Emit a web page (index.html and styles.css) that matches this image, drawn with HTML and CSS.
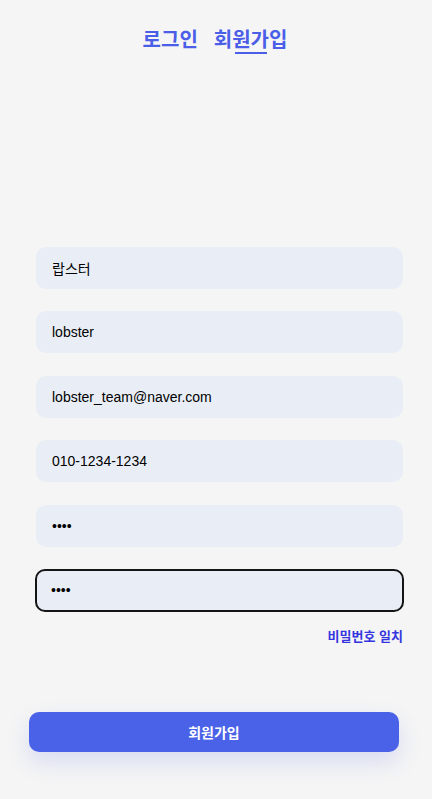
FILE: index.html
```html
<!DOCTYPE html>
<html lang="ko">
<head>
<meta charset="utf-8">
<link rel="stylesheet" href="styles.css">
</head>
<body>
<div class="page">
  <nav class="tabs">
    <span class="tab">로그인</span>
    <span class="tab active">회원가입</span>
  </nav>
  <form class="form">
    <input class="field" type="text" value="랍스터">
    <input class="field" type="text" value="lobster">
    <input class="field" type="text" value="lobster_team@naver.com">
    <input class="field" type="text" value="010-1234-1234">
    <input class="field" type="password" value="1234">
    <input class="field focused" type="password" value="1234" autofocus>
    <p class="match">비밀번호 일치</p>
  </form>
  <button class="submit" type="button">회원가입</button>
</div>
</body>
</html>
```
FILE: styles.css
```css
html, body {
  margin: 0;
  padding: 0;
  background: #f5f5f5;
}
.page {
  height: 799px;
  font-family: "Liberation Sans", "Noto Sans CJK KR", sans-serif;
  display: flex;
  flex-direction: column;
}
.tabs {
  display: flex;
  justify-content: center;
  gap: 16px;
  padding-top: 26px;
  padding-right: 2px;
}
.tab {
  font-family: "Noto Sans CJK KR", sans-serif;
  font-weight: 700;
  font-size: 20px;
  line-height: 26px;
  color: #4a5ee8;
  position: relative;
  padding-bottom: 4px;
}
.tab.active::after {
  content: "";
  position: absolute;
  left: 50%;
  bottom: 2px;
  width: 32px;
  height: 2px;
  margin-left: -16px;
  background: #4a5ee8;
}
.form {
  margin: 0;
  padding: 191px 29px 0 36px;
  display: flex;
  flex-direction: column;
  gap: 22.4px;
}
.field {
  box-sizing: border-box;
  height: 42px;
  width: 100%;
  border: 2px solid transparent;
  border-radius: 10px;
  background: #e9eef6;
  padding: 0 14px;
  font-family: "Liberation Sans", "Noto Sans CJK KR", sans-serif;
  font-size: 14px;
  color: #000;
  outline: none;
}
.field.focused {
  border-color: #151515;
  margin: 0 -1px;
  width: calc(100% + 2px);
  height: 43px;
}
.match {
  margin: -8px 0 0 0;
  text-align: right;
  font-family: "Noto Sans CJK KR", sans-serif;
  font-weight: 700;
  font-size: 13px;
  color: #3535e0;
}
.submit {
  margin: 67px 33px 0 29px;
  height: 40px;
  border: none;
  border-radius: 10px;
  background: #4a62e8;
  color: #fff;
  font-family: "Noto Sans CJK KR", sans-serif;
  font-weight: 700;
  font-size: 14px;
  box-shadow: 0 10px 22px rgba(74, 98, 232, 0.17);
}
```
